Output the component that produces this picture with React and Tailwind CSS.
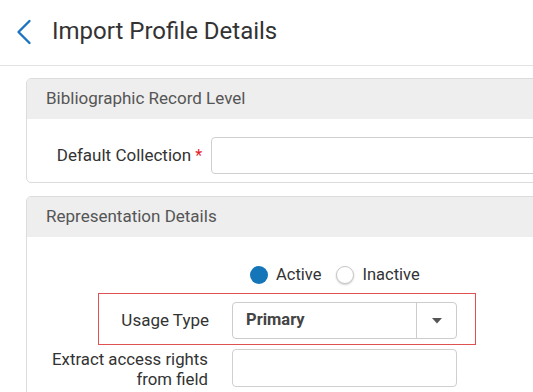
export default function App() {
  return (
    <div className="w-[533px] h-[392px] overflow-hidden bg-white font-['Roboto',sans-serif] text-[#333]">
      {/* page header */}
      <div className="h-[66px] border-b border-[#e2e2e2] flex items-center">
        <svg className="ml-[16px] mb-[2px]" width="16" height="26" viewBox="0 0 16 26">
          <path d="M13.5 2 L2.5 13 L13.5 24" fill="none" stroke="#1b74bf" strokeWidth="2.4" strokeLinecap="round" strokeLinejoin="round" />
        </svg>
        <h1 className="ml-[20px] mb-[3px] text-[24px] text-[#333] font-normal">Import Profile Details</h1>
      </div>

      <div className="pl-[26px] pt-[12px]">
        {/* Bibliographic Record Level */}
        <div className="w-[580px] border border-[#dcdcdc] rounded-[5px] overflow-hidden">
          <div className="h-[40px] bg-[#eeeeee] px-[19px] flex items-center text-[17px] text-[#555]">
            Bibliographic Record Level
          </div>
          <div className="pt-[18px] pb-[8px] flex items-center">
            <div className="w-[178px] text-right text-[17px] text-[#333]">
              Default Collection <span className="text-[#e4202a] text-[16px]">*</span>
            </div>
            <div className="ml-[9px] w-[400px] h-[37px] border border-[#cfcfcf] rounded-[4px]"></div>
          </div>
        </div>

        {/* Representation Details */}
        <div className="mt-[13px] w-[580px] border border-[#dcdcdc] rounded-[5px] overflow-hidden">
          <div className="h-[40px] bg-[#eeeeee] px-[19px] flex items-center text-[17px] text-[#555]">
            Representation Details
          </div>
          <div className="pt-[26px]">
            <div className="h-[24px] ml-[223px] flex items-center text-[16.5px] text-[#333]">
              <span className="w-[18px] h-[18px] rounded-full bg-[#1575b9]"></span>
              <span className="ml-[8px]">Active</span>
              <span className="ml-[15px] w-[18px] h-[18px] rounded-full bg-white border border-[#c8c8c8] shadow-[0_1px_2px_rgba(0,0,0,0.2)]"></span>
              <span className="ml-[8px]">Inactive</span>
            </div>

            <div className="mt-[6px] ml-[71px] w-[378px] border border-[#e05252] pt-[8px] pb-[5px] flex items-center">
              <div className="w-[110px] text-right text-[17px] text-[#333]">Usage Type</div>
              <div className="ml-[23px] w-[225px] h-[37px] border border-[#cccccc] rounded-[4px] flex">
                <div className="flex-1 flex items-center pl-[13px] text-[16.5px] font-bold text-[#444]">Primary</div>
                <div className="w-[40px] border-l border-[#cccccc] flex items-center justify-center">
                  <svg width="10" height="6" viewBox="0 0 10 6">
                    <path d="M0 0 L10 0 L5 5.5 Z" fill="#555" />
                  </svg>
                </div>
              </div>
            </div>

            <div className="mt-[4px] flex items-start">
              <div className="w-[181px] pt-[1px] text-right text-[16.8px] leading-[19.5px] text-[#333]">
                <div>Extract access rights</div>
                <div>from field</div>
              </div>
              <div className="ml-[24px] w-[225px] h-[38px] border border-[#cfcfcf] rounded-[4px]"></div>
            </div>
            <div className="h-[20px]"></div>
          </div>
        </div>
      </div>
    </div>
  )
}
